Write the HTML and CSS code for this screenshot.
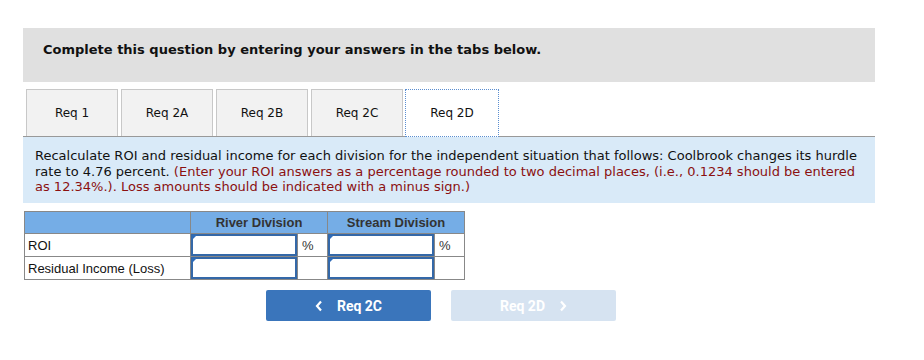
FILE: index.html
```html
<!doctype html>
<html lang="en">
<head>
  <meta charset="UTF-8">
  <meta name="viewport" content="width=device-width, initial-scale=1">
  <title>Req 2D</title>

  <link rel="stylesheet" href="styles.css">
</head>
<body>

<main class="wrap">
  <div class="intro">Complete this question by entering your answers in the tabs below.</div>

  <div class="tabs">
    <div class="tab">Req 1</div>
    <div class="tab">Req 2A</div>
    <div class="tab">Req 2B</div>
    <div class="tab">Req 2C</div>
    <div class="tab active">Req 2D</div>
  </div>

  <div class="question">
    Recalculate ROI and residual income for each division for the independent situation that follows: Coolbrook changes its hurdle
    rate to 4.76 percent. <span class="note">(Enter your ROI answers as a percentage rounded to two decimal places, (i.e., 0.1234 should be entered
    as 12.34%.). Loss amounts should be indicated with a minus sign.)</span>
  </div>

  <table class="answers">
    <tr>
      <th class="label"></th>
      <th colspan="2">River Division</th>
      <th colspan="2">Stream Division</th>
    </tr>
    <tr>
      <td class="label">ROI</td>
      <td class="field"><input type="text"></td>
      <td class="unit">%</td>
      <td class="field"><input type="text"></td>
      <td class="unit">%</td>
    </tr>
    <tr>
      <td class="label">Residual Income (Loss)</td>
      <td class="field"><input type="text"></td>
      <td class="unit"></td>
      <td class="field"><input type="text"></td>
      <td class="unit"></td>
    </tr>
  </table>

  <div class="nav">
    <button class="prev">
      <svg width="8" height="12" viewBox="0 0 8 12"><path d="M6 1.5 L2 6 L6 10.5" fill="none" stroke="#fff" stroke-width="2.2"/></svg>
      Req 2C
    </button>
    <button class="next" disabled>
      Req 2D
      <svg width="8" height="12" viewBox="0 0 8 12"><path d="M2 1.5 L6 6 L2 10.5" fill="none" stroke="#fff" stroke-width="2.2"/></svg>
    </button>
  </div>
</main>

</body>
</html>
```

FILE: styles.css
```css
* {
    margin: 0;
    padding: 0;
    box-sizing: border-box;
}

body {
    background: #fff;
    font-family: "DejaVu Sans", Verdana, sans-serif;
    color: #111;
}

.wrap {
    width: 875px;
    padding: 28px 0 0 23px;
}

.intro {
    height: 54px;
    background: #e0e0e0;
    padding: 14px 0 0 20px;
    font-size: 13px;
    font-weight: bold;
}

.tabs {
    display: flex;
    gap: 3px;
    margin-top: 7px;
    padding-left: 3px;
    border-bottom: 1px solid #999;
    height: 48px;
}

.tab {
    width: 92px;
    height: 47px;
    background: #f2f2f2;
    border: 1px solid #c8c8c8;
    border-bottom: none;
    display: flex;
    align-items: center;
    justify-content: center;
    font-size: 12px;
}

.tab.active {
    width: 94px;
    height: 48px;
    background: #fff;
    border: 1px dotted #5b8ed0;
    margin-left: -1px;
}

.question {
    background: #d9eaf8;
    height: 66px;
    padding: 11px 12px 0 12px;
    font-size: 13px;
    line-height: 15.6px;
}

.note {
    color: #8b1010;
}

.answers {
    margin-top: 8px;
    margin-left: 1px;
    border-collapse: collapse;
    font-family: "Liberation Sans", Arial, sans-serif;
    font-size: 13px;
}

.answers th, .answers td {
    border: 1px solid #888;
    height: 22px;
}

.answers th {
    background: #75ade6;
    color: #333;
    font-size: 13px;
    height: 22px;
}

.answers .label {
    width: 166px;
    padding-left: 3px;
    text-align: left;
}

.answers .field {
    width: 106px;
    padding: 0;
    position: relative;
}

.answers .field::before {
    content: "";
    position: absolute;
    z-index: 1;
    top: 1px;
    left: 1px;
    border-left: 5px solid #2e6bb8;
    border-bottom: 5px solid transparent;
}

.answers input {
    display: block;
    width: 106px;
    height: 22px;
    border: 2px solid #3468a8;
    outline: none;
}

.answers .unit {
    width: 30px;
    padding-left: 4px;
    color: #333;
}

.nav {
    display: flex;
    gap: 20px;
    margin-top: 10px;
    padding-left: 243px;
}

.nav button {
    width: 165px;
    height: 31px;
    border: none;
    border-radius: 2px;
    font-family: Roboto, sans-serif;
    font-weight: bold;
    font-size: 14px;
    color: #fff;
    display: flex;
    align-items: center;
    justify-content: center;
    gap: 14px;
}

.prev {
    background: #3a75bb;
}

.next {
    background: #d6e3f1;
}
```
